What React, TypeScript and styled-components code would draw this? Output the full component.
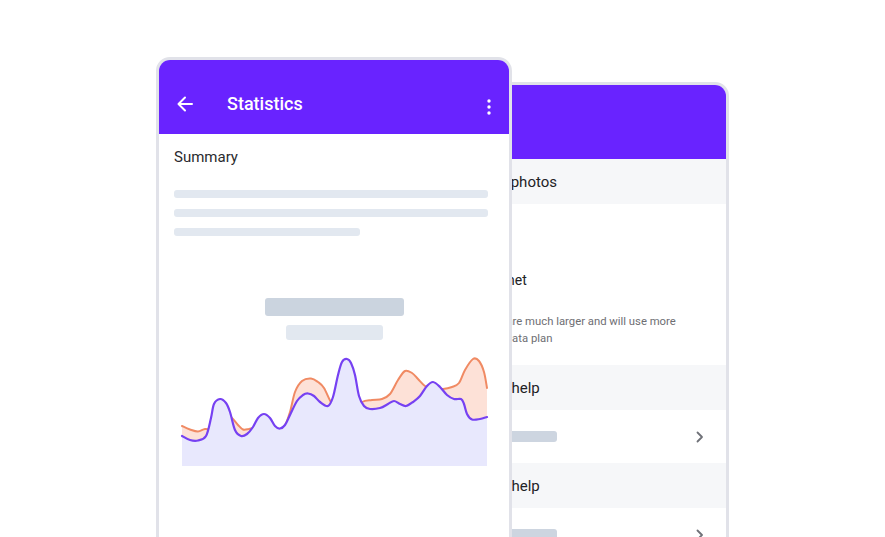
import React from "react";
import styled, { createGlobalStyle } from "styled-components";

const Global = createGlobalStyle`
  html, body { margin: 0; padding: 0; background: #ffffff; overflow: hidden; }
  body { font-family: Roboto, "Liberation Sans", Arial, sans-serif; }
  #root { width: 885px; height: 537px; overflow: hidden; }
`;

const Stage = styled.div`
  display: flex;
  align-items: flex-start;
  padding: 57px 0 0 156px;
  height: 537px;
  box-sizing: border-box;
  overflow: hidden;
`;

const Card = styled.div<{ $front?: boolean }>`
  box-sizing: border-box;
  width: 356px;
  height: 540px;
  flex: none;
  border: 3px solid #e1e2e9;
  border-radius: 14px;
  background: #ffffff;
  overflow: hidden;
  display: flex;
  flex-direction: column;
  position: relative;
  z-index: ${(p) => (p.$front ? 2 : 1)};
  margin-left: ${(p) => (p.$front ? "0" : "-139px")};
  margin-top: ${(p) => (p.$front ? "0" : "25px")};
`;

const AppBar = styled.div`
  height: 74px;
  flex: none;
  background: #6923ff;
  display: flex;
  align-items: flex-start;
  padding: 33px 18px 0 18px;
  box-sizing: border-box;
  color: #ffffff;
`;

const BackButton = styled.svg`
  width: 16px;
  height: 16px;
  margin-top: 3px;
  flex: none;
`;

const Title = styled.div`
  margin-left: 34px;
  font-size: 18px;
  line-height: 22px;
  font-weight: 500;
  flex: 1;
`;

const Kebab = styled.svg`
  width: 4px;
  height: 16px;
  margin-top: 6px;
  margin-right: 0;
  flex: none;
`;

const Content = styled.div`
  display: flex;
  flex-direction: column;
  padding: 14px 0 0 15px;
`;

const SectionTitle = styled.div`
  font-size: 15px;
  line-height: 18px;
  color: #2a2a2e;
`;

const Lines = styled.div`
  display: flex;
  flex-direction: column;
  gap: 11px;
  margin-top: 24px;
`;

const Line = styled.div<{ $w: number }>`
  width: ${(p) => p.$w}px;
  height: 8px;
  border-radius: 3px;
  background: #e2e8f0;
`;

const Figure = styled.div`
  display: flex;
  flex-direction: column;
  align-items: center;
  margin: 62px 0 0 -15px;
  gap: 9px;
`;

const BigBar = styled.div<{ $w: number; $h: number; $c: string }>`
  width: ${(p) => p.$w}px;
  height: ${(p) => p.$h}px;
  border-radius: 3px;
  background: ${(p) => p.$c};
`;

const Chart = styled.svg`
  display: block;
  margin: 15px 0 0 7px;
  align-self: flex-start;
  overflow: visible;
`;

/* back card */
const GroupHeader = styled.div`
  height: 45px;
  flex: none;
  background: #f6f7f9;
  display: flex;
  align-items: center;
  padding-left: 84px;
  font-size: 15px;
  color: #222226;
`;

const SettingBlock = styled.div`
  height: 161px;
  flex: none;
  display: flex;
  flex-direction: column;
  padding: 67px 20px 0 92px;
  box-sizing: border-box;
`;

const SettingTitle = styled.div`
  font-size: 14px;
  line-height: 18px;
  color: #222226;
  margin-left: -16px;
`;

const SettingDesc = styled.div`
  margin-top: 24px;
  font-size: 11.3px;
  line-height: 17px;
  color: #6e6e73;
  width: 215px;
`;

const LinkRow = styled.div`
  height: 53px;
  flex: none;
  display: flex;
  align-items: center;
  padding: 0 22px 0 90px;
`;

const RowBar = styled.div`
  width: 91px;
  height: 11px;
  border-radius: 3px;
  background: #cdd5e0;
  flex: none;
`;

const Spacer = styled.div`
  flex: 1;
`;

const Chevron = styled.svg`
  width: 8px;
  height: 12px;
  flex: none;
`;

type P = [number, number];

function smooth(pts: P[]): string {
  let d = `M${pts[0][0]},${pts[0][1]}`;
  for (let i = 0; i < pts.length - 1; i++) {
    const p0 = pts[i - 1] || pts[i];
    const p1 = pts[i];
    const p2 = pts[i + 1];
    const p3 = pts[i + 2] || p2;
    const c1x = p1[0] + (p2[0] - p0[0]) / 6;
    const c1y = p1[1] + (p2[1] - p0[1]) / 6;
    const c2x = p2[0] - (p3[0] - p1[0]) / 6;
    const c2y = p2[1] - (p3[1] - p1[1]) / 6;
    d += ` C${c1x.toFixed(1)},${c1y.toFixed(1)} ${c2x.toFixed(1)},${c2y.toFixed(1)} ${p2[0]},${p2[1]}`;
  }
  return d;
}

const purple: P[] = [
  [182, 436], [190, 440], [198, 440.5], [206, 436], [211, 418], [214, 404], [220, 399],
  [226, 403], [230, 412], [235, 430], [241, 436], [247, 434], [253, 427], [258, 418],
  [264, 414], [270, 418], [275, 426], [280, 428.5], [285, 425], [290, 415], [297, 401],
  [303, 395], [308, 393.5], [314, 396], [320, 402], [328, 406], [333, 397], [338, 375],
  [342, 362], [347, 359], [351, 363], [355, 375], [359, 396], [364, 406], [370, 409],
  [380, 408], [388, 404], [394, 401], [400, 404], [406, 406], [413, 402], [420, 396],
  [427, 386], [433, 382], [440, 387], [447, 395], [454, 399], [461, 399], [464, 404],
  [467, 414], [472, 419.5], [480, 419], [487, 417],
];

const orange: P[] = [
  [182, 426], [190, 429.5], [198, 431.5], [205, 429], [212, 430], [220, 432], [228, 418],
  [232, 418], [238, 425], [243, 429.5], [249, 429], [255, 428], [264, 430], [275, 432],
  [284, 427], [290, 412], [295, 392], [302, 381], [311, 378.5], [318, 382], [324, 388],
  [332, 404], [340, 412], [352, 412], [362, 402], [372, 400], [382, 399], [390, 394],
  [398, 380], [405, 371], [412, 373], [418, 379], [425, 386], [433, 389], [443, 389],
  [452, 387], [459, 383], [465, 370], [473, 359], [479, 361], [484, 372], [487, 388],
];

const BOTTOM = 466;

function area(pts: P[]): string {
  const last = pts[pts.length - 1];
  return `${smooth(pts)} L${last[0]},${BOTTOM} L${pts[0][0]},${BOTTOM} Z`;
}

function WaveChart() {
  return (
    <Chart width={308} height={112} viewBox="181 355 308 112">
      <path d={area(orange)} fill="#fde1d7" />
      <path d={smooth(orange)} fill="none" stroke="#f08a63" strokeWidth={2} strokeLinecap="round" />
      <path d={area(purple)} fill="#e8e8fd" />
      <path d={smooth(purple)} fill="none" stroke="#7641f2" strokeWidth={2.2} strokeLinecap="round" />
    </Chart>
  );
}

function ChevronRight() {
  return (
    <Chevron viewBox="0 0 8 12">
      <path d="M1.5 1.5 L6 6 L1.5 10.5" fill="none" stroke="#6f7178" strokeWidth={1.8} strokeLinecap="round" strokeLinejoin="round" />
    </Chevron>
  );
}

export default function App() {
  return (
    <>
      <Global />
      <Stage>
        <Card $front>
          <AppBar>
            <BackButton viewBox="0 0 16 16">
              <path d="M15 8 H1.5 M8 1.5 L1.5 8 L8 14.5" fill="none" stroke="#ffffff" strokeWidth={2} strokeLinecap="round" strokeLinejoin="round" />
            </BackButton>
            <Title>Statistics</Title>
            <Kebab viewBox="0 0 4 16">
              <circle cx="2" cy="2" r="1.7" fill="#ffffff" />
              <circle cx="2" cy="8" r="1.7" fill="#ffffff" />
              <circle cx="2" cy="14" r="1.7" fill="#ffffff" />
            </Kebab>
          </AppBar>
          <Content>
            <SectionTitle>Summary</SectionTitle>
            <Lines>
              <Line $w={314} />
              <Line $w={314} />
              <Line $w={186} />
            </Lines>
            <Figure>
              <BigBar $w={139} $h={18} $c="#cbd4df" />
              <BigBar $w={97} $h={15} $c="#e2e8f0" />
            </Figure>
            <WaveChart />
          </Content>
        </Card>
        <Card>
          <AppBar />
          <GroupHeader>Upload photos</GroupHeader>
          <SettingBlock>
            <SettingTitle>Use internet</SettingTitle>
            <SettingDesc>Photos are much larger and will use more of your data plan</SettingDesc>
          </SettingBlock>
          <GroupHeader>Ask for help</GroupHeader>
          <LinkRow>
            <RowBar />
            <Spacer />
            <ChevronRight />
          </LinkRow>
          <GroupHeader>Ask for help</GroupHeader>
          <LinkRow>
            <RowBar />
            <Spacer />
            <ChevronRight />
          </LinkRow>
        </Card>
      </Stage>
    </>
  );
}
